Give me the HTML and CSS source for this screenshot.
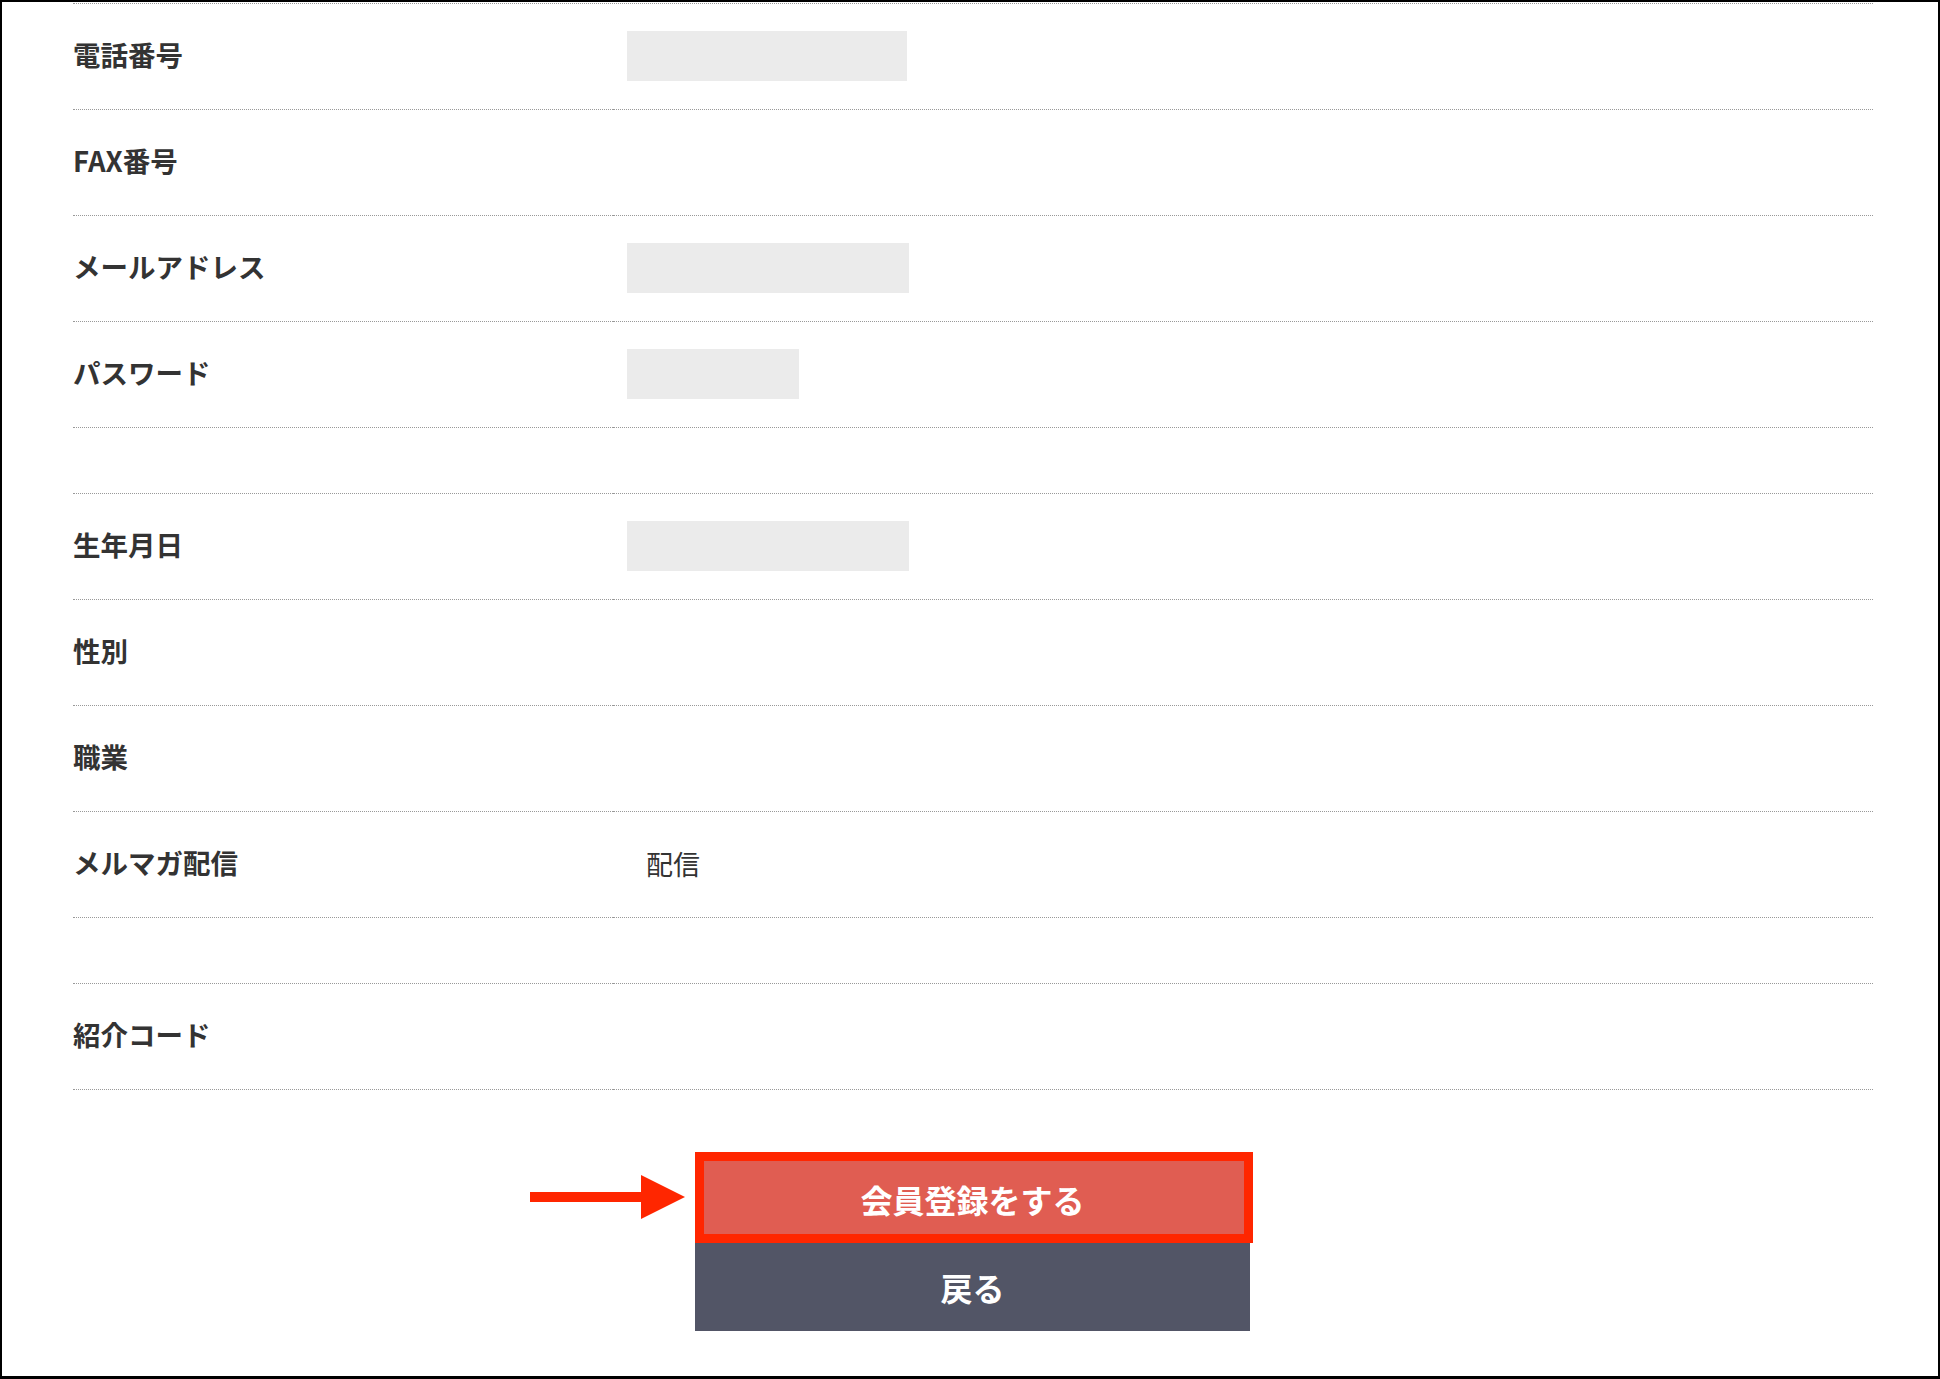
FILE: index.html
```html
<!DOCTYPE html>
<html lang="ja">
<head>
    <meta charset="UTF-8">
    <meta name="viewport" content="width=device-width, initial-scale=1.0">
    <title>会員登録 確認</title>
    <link rel="stylesheet" href="styles.css">
</head>
<body>
    <div class="frame">
        <table class="form-table">
            <tr>
                <th>電話番号</th>
                <td><div class="field"></div></td>
            </tr>
            <tr>
                <th>FAX番号</th>
                <td></td>
            </tr>
            <tr>
                <th>メールアドレス</th>
                <td><div class="field field-wide"></div></td>
            </tr>
            <tr>
                <th>パスワード</th>
                <td><div class="field field-short"></div></td>
            </tr>
            <tr class="spacer">
                <th></th>
                <td></td>
            </tr>
            <tr>
                <th>生年月日</th>
                <td><div class="field field-wide"></div></td>
            </tr>
            <tr>
                <th>性別</th>
                <td></td>
            </tr>
            <tr>
                <th>職業</th>
                <td></td>
            </tr>
            <tr>
                <th>メルマガ配信</th>
                <td><span class="value">配信</span></td>
            </tr>
            <tr class="spacer">
                <th></th>
                <td></td>
            </tr>
            <tr>
                <th>紹介コード</th>
                <td></td>
            </tr>
        </table>

        <div class="actions">
            <div class="submit-wrap">
                <svg class="arrow" width="155" height="44" viewBox="0 0 155 44">
                    <rect x="0" y="17" width="113" height="10" fill="#ff2600"/>
                    <polygon points="111,0 155,22 111,44" fill="#ff2600"/>
                </svg>
                <button class="btn btn-submit">会員登録をする</button>
                <div class="highlight"></div>
            </div>
            <button class="btn btn-back">戻る</button>
        </div>
    </div>
</body>
</html>
```

FILE: styles.css
```css
body {
    margin: 0;
    padding: 0;
    background: #fff;
    font-family: "Noto Sans CJK JP", "Noto Sans", sans-serif;
    color: #333;
}

.frame {
    box-sizing: border-box;
    height: 1379px;
    border: 2px solid #000;
    border-bottom-width: 3px;
    padding-top: 1px;
    overflow: hidden;
}

.form-table {
    width: 1800px;
    margin-left: 71px;
    border-collapse: separate;
    border-spacing: 0;
    border-top: 1px dotted #999;
}

.form-table th,
.form-table td {
    height: 103px;
    padding: 0 0 2px 0;
    border-bottom: 1px dotted #999;
    vertical-align: middle;
    text-align: left;
}

.form-table th {
    width: 540px;
    height: 100px;
    padding-bottom: 5px;
    font-size: 27.5px;
    font-weight: bold;
}

.form-table td {
    padding-left: 14px;
}

.form-table .spacer th,
.form-table .spacer td {
    height: 63px;
    padding-bottom: 2px;
}

.field {
    width: 280px;
    height: 50px;
    background: #ebebeb;
}

.field-wide {
    width: 282px;
}

.field-short {
    width: 172px;
}

.value {
    display: inline-block;
    padding-left: 19px;
    font-size: 27px;
}

.actions {
    display: flex;
    flex-direction: column;
    align-items: center;
    margin-top: 65px;
    padding-left: 5px;
}

.submit-wrap {
    position: relative;
}

.btn {
    display: block;
    width: 555px;
    height: 88px;
    border: none;
    margin: 0;
    padding: 0;
    font-family: "Noto Sans CJK JP", "Noto Sans", sans-serif;
    font-size: 32px;
    font-weight: bold;
    color: #fff;
    cursor: pointer;
}

.btn-submit {
    background: #e05d52;
}

.btn-back {
    background: #525566;
}

.highlight {
    position: absolute;
    top: -3px;
    left: 0;
    right: -3px;
    bottom: 0;
    border: 9px solid #ff2600;
    pointer-events: none;
}

.arrow {
    position: absolute;
    left: -165px;
    top: 20px;
}
```
